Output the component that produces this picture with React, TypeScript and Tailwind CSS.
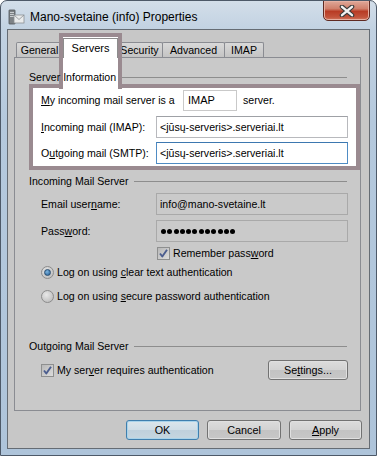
import React from "react";

function Checkbox() {
  return (
    <div className="w-[13px] h-[13px] border border-[#8e8f8f] bg-[linear-gradient(135deg,#b8b8b8,#dcdcdc)] flex items-center justify-center shrink-0">
      <svg width="11" height="11" viewBox="0 0 11 11">
        <path d="M2 5.5 L4.3 8.5 L9 1.8" fill="none" stroke="#4b5d8f" strokeWidth="1.9" strokeLinejoin="round" />
      </svg>
    </div>
  );
}

function Radio({ checked }: { checked?: boolean }) {
  return (
    <div className="w-[13px] h-[13px] rounded-full border border-[#8c8c8c] bg-[radial-gradient(circle_at_40%_35%,#e8e8e8,#b4b4b4)] flex items-center justify-center shrink-0">
      {checked && (
        <div className="w-[7px] h-[7px] rounded-full bg-[radial-gradient(circle_at_40%_35%,#7fb5df,#1f5c95)] border border-[#2b4e70]" />
      )}
    </div>
  );
}

function Button({ children, primary, w }: { children: React.ReactNode; primary?: boolean; w: string }) {
  return (
    <div
      className={
        "h-[20px] rounded-[3px] border flex items-center justify-center text-[10.8px] " +
        w +
        " " +
        (primary
          ? "border-[#3f7fae] bg-[linear-gradient(180deg,#dbe6ec_0%,#cfdde6_50%,#bfd0dc_51%,#c6d6e0_100%)] shadow-[inset_0_0_0_1px_#a9d3ea]"
          : "border-[#727272] bg-[linear-gradient(180deg,#dcdcdc_0%,#d2d2d2_50%,#c3c3c3_51%,#c7c7c7_100%)] shadow-[inset_0_0_0_1px_#e0e0e0]")
      }
    >
      {children}
    </div>
  );
}

function Tab({ label, w }: { label: string; w: string }) {
  return (
    <div
      className={
        "h-[15px] border-x border-t border-[#8a8c92] rounded-t-[2px] bg-[linear-gradient(180deg,#d9d9d9,#c4c4c4)] flex items-center justify-center text-[10.6px] leading-none -mr-px " +
        w
      }
    >
      {label}
    </div>
  );
}

function GroupHeader({ title, z }: { title: React.ReactNode; z?: boolean }) {
  return (
    <div className="h-[14px] pl-[14px] pr-[13px] flex items-center">
      <span className={"text-[10.6px] leading-none whitespace-nowrap " + (z ? "relative z-20" : "")}>{title}</span>
      <div className="flex-1 ml-[5px] h-px bg-[#8d8d8d]" />
    </div>
  );
}

export default function App() {
  return (
    <div className="relative w-[377px] h-[456px] overflow-hidden font-['Liberation_Sans',Arial,sans-serif] text-black rounded-t-[7px] border border-[#4d5968] bg-[linear-gradient(180deg,#d3dee9_0px,#c2d2e2_28px,#b5c9dd_120px,#aec4da_100%)] flex flex-col">
      {/* Title bar */}
      <div className="h-[28px] flex items-start pl-[7px] pr-[6px]">
        <svg width="17" height="17" viewBox="0 0 17 17" className="mt-[8px] shrink-0">
          <rect x="1" y="1" width="6" height="14" rx="0.5" fill="#7d8286" stroke="#4f5458" strokeWidth="0.8" />
          <rect x="2" y="3" width="4" height="1" fill="#c9cdd0" />
          <rect x="2" y="5" width="4" height="1" fill="#c9cdd0" />
          <rect x="2" y="7" width="4" height="1" fill="#c9cdd0" />
          <rect x="6" y="6" width="10" height="8" fill="#e9ebec" stroke="#8b9094" strokeWidth="0.8" />
          <path d="M6 6 L11 10.5 L16 6" fill="none" stroke="#8b9094" strokeWidth="0.8" />
        </svg>
        <div className="ml-[5px] mt-[9px] text-[12px] leading-[14px] text-black whitespace-nowrap">Mano-svetaine (info) Properties</div>
        <div className="flex-1" />
        <div className="-mt-px w-[47px] h-[21px] rounded-b-[5px] border border-[#5f2a22] bg-[linear-gradient(180deg,#dfa899_0%,#d0806c_40%,#b83c25_55%,#c3543c_85%,#d07a62_100%)] shadow-[inset_0_0_0_1px_#e6b0a2] flex items-center justify-center">
          <svg width="16" height="12" viewBox="0 0 16 12">
            <path d="M3 1.8 L13 10.2 M13 1.8 L3 10.2" stroke="#3b3b3b" strokeWidth="4.6" strokeLinecap="round" />
            <path d="M3 1.8 L13 10.2 M13 1.8 L3 10.2" stroke="#f2f2f2" strokeWidth="2.4" strokeLinecap="round" />
          </svg>
        </div>
      </div>

      {/* Client area */}
      <div className="mx-[6px] h-[420px] border border-[#656c74] bg-[#c7c7c7] flex flex-col">
        {/* Tabs */}
        <div className="h-[27px] pt-[12px] pl-[8px] flex items-end">
          <Tab label="General" w="w-[47px]" />
          <div className="w-[55px] h-[15px] -mr-px" />
          <Tab label="Security" w="w-[47px]" />
          <Tab label="Advanced" w="w-[63px]" />
          <Tab label="IMAP" w="w-[40px]" />
        </div>

        {/* Panel */}
        <div className="ml-[6px] w-[347px] h-[354px] border border-[#8a8c92] bg-[#c9c9c9] pt-[12px] flex flex-col">
          <GroupHeader title="Server Information" z />

          {/* Highlighted box */}
          <div className="ml-[14px] h-[86px] border-4 border-[#9a8a90] bg-white pt-[2px] pl-[8px] pr-[8px] flex flex-col text-[10.6px] leading-none">
            <div className="h-[21px] flex items-center">
              <div className="w-[142px] whitespace-nowrap">
                <u>M</u>y incoming mail server is a
              </div>
              <div className="w-[54px] h-[21px] border border-[#c9c9c9] bg-white flex items-center pl-[4px] text-[11px]">IMAP</div>
              <div className="ml-[6px]">server.</div>
            </div>
            <div className="mt-[5px] h-[22px] flex items-center">
              <div className="w-[115px] whitespace-nowrap">
                <u>I</u>ncoming mail (IMAP):
              </div>
              <div className="w-[192px] h-[22px] border border-[#b8b9bd] border-t-[#9fa1a6] bg-white flex items-center pl-[3px] whitespace-nowrap">
                &lt;jūsų-serveris&gt;.serveriai.lt
              </div>
            </div>
            <div className="mt-[4px] h-[22px] flex items-center">
              <div className="w-[115px] whitespace-nowrap">
                O<u>u</u>tgoing mail (SMTP):
              </div>
              <div className="w-[192px] h-[22px] border border-[#4f8cc4] border-t-[#3d78b0] bg-white flex items-center pl-[3px] whitespace-nowrap">
                &lt;jūsų-serveris&gt;.serveriai.lt
              </div>
            </div>
          </div>

          <div className="mt-[4px]">
            <GroupHeader title="Incoming Mail Server" />
          </div>

          <div className="text-[10.6px] leading-none">
            <div className="mt-[5px] h-[22px] pl-[26px] flex items-center">
              <div className="w-[115px] whitespace-nowrap">
                Email user<u>n</u>ame:
              </div>
              <div className="w-[192px] h-[22px] border border-[#a9a9a9] bg-[#cacaca] flex items-center pl-[3px]">
                info@mano-svetaine.lt
              </div>
            </div>
            <div className="mt-[5px] h-[22px] pl-[26px] flex items-center">
              <div className="w-[115px] whitespace-nowrap">
                Pass<u>w</u>ord:
              </div>
              <div className="w-[192px] h-[22px] border border-[#a9a9a9] bg-[#cacaca] flex items-center pl-[4px] gap-[1.3px]">
                {Array.from({ length: 12 }).map((_, i) => (
                  <div key={i} className="w-[5px] h-[5px] rounded-full bg-black" />
                ))}
              </div>
            </div>
            <div className="mt-[4px] h-[14px] pl-[142px] flex items-center">
              <Checkbox />
              <div className="ml-[3px] whitespace-nowrap">
                Remember pass<u>w</u>ord
              </div>
            </div>
            <div className="mt-[5px] h-[14px] pl-[26px] flex items-center">
              <Radio checked />
              <div className="ml-[3px] whitespace-nowrap">
                Log on using <u>c</u>lear text authentication
              </div>
            </div>
            <div className="mt-[10px] h-[14px] pl-[26px] flex items-center">
              <Radio />
              <div className="ml-[3px] whitespace-nowrap">
                Log on using <u>s</u>ecure password authentication
              </div>
            </div>
          </div>

          <div className="mt-[36px]">
            <GroupHeader title="Outgoing Mail Server" />
          </div>

          <div className="mt-[7px] h-[20px] pl-[26px] pr-[12px] flex items-center text-[10.6px] leading-none">
            <Checkbox />
            <div className="ml-[3px] whitespace-nowrap">
              My ser<u>v</u>er requires authentication
            </div>
            <div className="flex-1" />
            <Button w="w-[80px]">
              <span>
                Se<u>t</u>tings...
              </span>
            </Button>
          </div>
        </div>

        {/* Buttons */}
        <div className="mt-[9px] h-[20px] pr-[7px] flex justify-end gap-[8px]">
          <Button primary w="w-[73px]">OK</Button>
          <Button w="w-[74px]">Cancel</Button>
          <Button w="w-[73px]">
            <span>
              <u>A</u>pply
            </span>
          </Button>
        </div>
      </div>

      {/* Highlight overlay around the selected Servers tab */}
      <div className="absolute left-[58px] top-[32px] w-[63px] h-[56px] border-x-4 border-t-4 border-[#9a8a90] bg-white z-10">
        <div className="mt-px h-[20px] border-x border-t border-[#8d8d8d] flex items-center justify-center text-[11px] leading-none">
          Servers
        </div>
      </div>
    </div>
  );
}
